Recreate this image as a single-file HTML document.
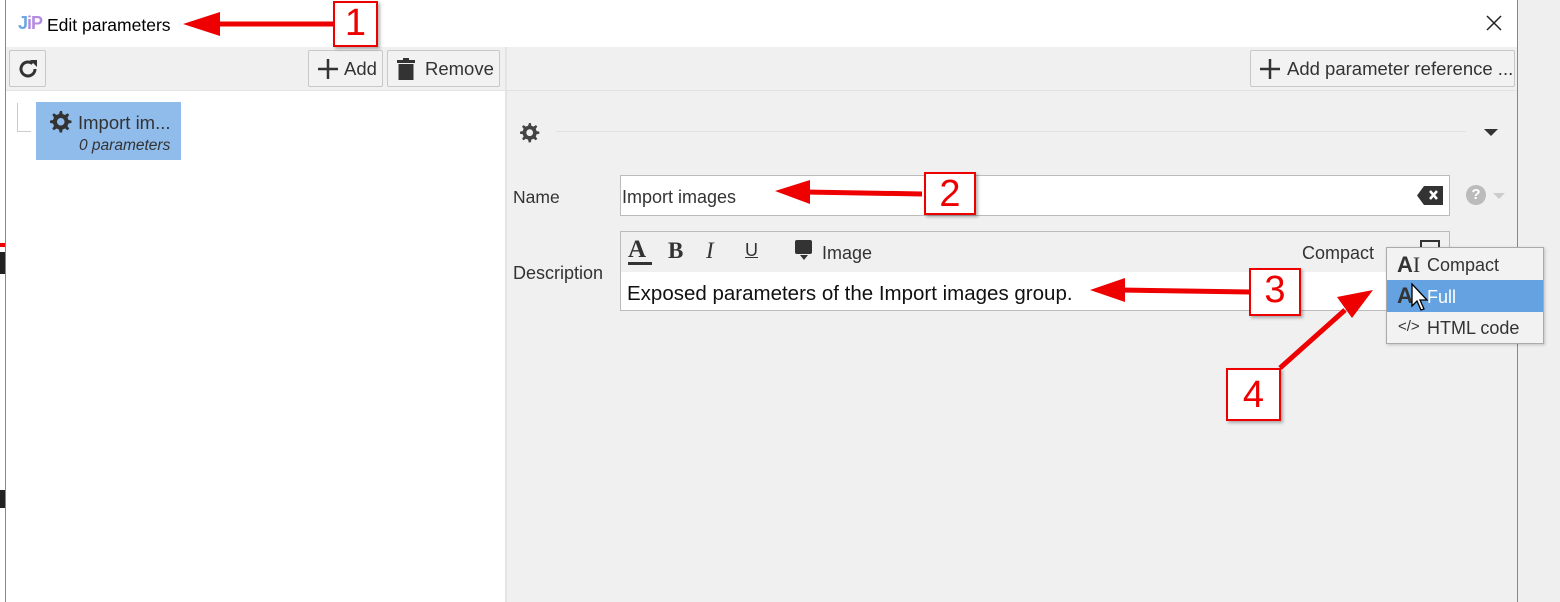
<!DOCTYPE html>
<html><head><style>
body{margin:0;width:1560px;height:602px;position:relative;overflow:hidden;background:#efefef;font-family:"Liberation Sans",sans-serif;}
.a{position:absolute;}
.btn{position:absolute;background:#f2f2f2;border:1px solid #c8c8c8;border-radius:2px;box-sizing:border-box;font-size:18.5px;color:#333;display:flex;align-items:center;}
.box{position:absolute;border:2px solid #e00;background:#fff;box-sizing:border-box;color:#e00;font-size:38px;text-align:center;line-height:40px;box-shadow:2px 2px 3px rgba(0,0,0,.3);}
.lbl{position:absolute;font-size:17.5px;color:#333;}
</style></head><body>
<svg width="0" height="0" style="position:absolute"><defs><g id="gear"><path d="M10 0 L12 0 L12.6 3 L15 4 L17.6 2.3 L19.2 3.9 L17.5 6.5 L18.5 9 L21.5 9.6 L21.5 11.9 L18.5 12.5 L17.5 15 L19.2 17.6 L17.6 19.2 L15 17.5 L12.6 18.5 L12 21.5 L9.6 21.5 L9 18.5 L6.5 17.5 L3.9 19.2 L2.3 17.6 L4 15 L3 12.5 L0 11.9 L0 9.6 L3 9 L4 6.5 L2.3 3.9 L3.9 2.3 L6.5 4 L9 3 Z M10.75 7 A3.75 3.75 0 1 0 10.76 7 Z" fill-rule="evenodd"/></g></defs></svg>
<div class="a" style="left:0;top:0;width:5px;height:602px;background:#fff"></div>
<div class="a" style="left:0;top:243px;width:5px;height:4px;background:#e00"></div>
<div class="a" style="left:0;top:252px;width:5px;height:22px;background:#222"></div>
<div class="a" style="left:0;top:490px;width:5px;height:18px;background:#222"></div>
<div class="a" style="left:5px;top:0;width:1513px;height:602px;background:#f0f0f0;border-left:1px solid #888;border-right:1px solid #888;box-sizing:border-box"></div>
<div class="a" style="left:6px;top:0;width:1511px;height:47px;background:#fff"></div>
<div class="a" style="left:18px;top:13px;font-size:18px;font-weight:bold;color:#6aa6e0;letter-spacing:-1px">J<span style="color:#b48be0">iP</span></div>
<div class="a" style="left:47px;top:15px;font-size:17.5px;color:#000">Edit parameters</div>
<svg class="a" style="left:1486px;top:15px" width="16" height="16"><path d="M1 1 L15 15 M15 1 L1 15" stroke="#222" stroke-width="1.5"/></svg>
<div class="a" style="left:6px;top:47px;width:499px;height:43px;background:#f0f0f0;border-bottom:1px solid #e2e2e2"></div>
<div class="btn" style="left:9px;top:50px;width:37px;height:37px;justify-content:center"><svg width="22" height="22" viewBox="0 0 22 22"><path d="M18 11 A7 7 0 1 1 15.5 5.6" fill="none" stroke="#333" stroke-width="3"/><polygon points="13,2 20,2 20,9" fill="#333"/></svg></div>
<div class="btn" style="left:308px;top:50px;width:75px;height:37px;padding-left:8px"><svg width="22" height="22" style="margin-right:5px"><path d="M11 1 V21 M1 11 H21" stroke="#333" stroke-width="2.5"/></svg>Add</div>
<div class="btn" style="left:387px;top:50px;width:113px;height:37px;padding-left:9px"><svg width="18" height="22" style="margin-right:10px"><rect x="0" y="2" width="18" height="3" fill="#333"/><rect x="6" y="0" width="6" height="3" fill="#333"/><rect x="1.5" y="6" width="15" height="16" fill="#333"/></svg>Remove</div>
<div class="a" style="left:6px;top:91px;width:499px;height:511px;background:#fff"></div>
<div class="a" style="left:505px;top:47px;width:2px;height:555px;background:#e4e4e4"></div>
<div class="a" style="left:17px;top:103px;width:13px;height:28px;border-left:1px solid #ccc;border-bottom:1px solid #ccc"></div>
<div class="a" style="left:36px;top:102px;width:145px;height:58px;background:#90bcec"></div>
<svg class="a" style="left:50px;top:111px" width="22" height="22"><use href="#gear" fill="#333"/></svg>
<div class="a" style="left:78px;top:112px;font-size:18.5px;color:#333">Import im...</div>
<div class="a" style="left:79px;top:137px;font-size:15.5px;font-style:italic;color:#333">0 parameters</div>
<div class="a" style="left:507px;top:90px;width:1010px;height:1px;background:#e2e2e2"></div>
<div class="btn" style="left:1250px;top:50px;width:265px;height:37px;padding-left:8px"><svg width="22" height="22" style="margin-right:6px"><path d="M11 1 V21 M1 11 H21" stroke="#333" stroke-width="2.5"/></svg>Add parameter reference ...</div>
<svg class="a" style="left:520px;top:123px" width="22" height="22"><g transform="scale(0.9)"><use href="#gear" fill="#444"/></g></svg>
<div class="a" style="left:556px;top:131px;width:910px;height:1px;background:#e2e2e2"></div>
<div class="a" style="left:1484px;top:129px;width:0;height:0;border-left:7px solid transparent;border-right:7px solid transparent;border-top:7px solid #333"></div>
<div class="lbl" style="left:513px;top:187px">Name</div>
<div class="a" style="left:620px;top:175px;width:830px;height:41px;background:#fff;border:1px solid #bbb;box-sizing:border-box"></div>
<div class="a" style="left:622px;top:187px;font-size:18px;color:#333">Import images</div>
<svg class="a" style="left:1417px;top:186px" width="26" height="19"><path d="M7 0 H26 V19 H7 L0 9.5 Z" fill="#333"/><path d="M13 5 L20 13 M20 5 L13 13" stroke="#fff" stroke-width="2.5"/></svg>
<div class="a" style="left:1466px;top:185px;width:20px;height:20px;border-radius:50%;background:#bbb;color:#fff;font-size:15px;font-weight:bold;text-align:center;line-height:20px">?</div>
<div class="a" style="left:1493px;top:193px;border-left:6px solid transparent;border-right:6px solid transparent;border-top:6px solid #ccc;width:0;height:0"></div>
<div class="lbl" style="left:513px;top:263px;font-size:18px">Description</div>
<div class="a" style="left:620px;top:231px;width:830px;height:80px;background:#f0f0f0;border:1px solid #bbb;box-sizing:border-box"></div>
<div class="a" style="left:621px;top:272px;width:828px;height:38px;background:#fff"></div>
<div class="a" style="left:628px;top:236px;font-size:25px;color:#333;font-family:'Liberation Serif',serif;font-weight:bold">A</div>
<div class="a" style="left:628px;top:262px;width:24px;height:3px;background:#333"></div>
<div class="a" style="left:668px;top:238px;font-size:23px;color:#333;font-family:'Liberation Serif',serif;font-weight:bold">B</div>
<div class="a" style="left:706px;top:238px;font-size:23px;color:#333;font-family:'Liberation Serif',serif;font-style:italic">I</div>
<div class="a" style="left:745px;top:240px;font-size:18px;color:#333;text-decoration:underline">U</div>
<div class="a" style="left:795px;top:240px;width:17px;height:14px;background:#333;border-radius:2px"></div>
<div class="a" style="left:800px;top:255px;border-left:4px solid transparent;border-right:4px solid transparent;border-top:5px solid #333;width:0;height:0"></div>
<div class="lbl" style="left:822px;top:243px;font-size:18px">Image</div>
<div class="lbl" style="left:1302px;top:243px;font-size:18px">Compact</div>
<div class="a" style="left:1420px;top:240px;width:16px;height:10px;border:2px solid #333;border-bottom:none"></div>
<div class="a" style="left:627px;top:282px;font-size:20.5px;color:#111">Exposed parameters of the Import images group.</div>
<div class="a" style="left:1386px;top:247px;width:158px;height:97px;background:#f2f2f2;border:1px solid #aaa;box-sizing:border-box;box-shadow:1px 1px 3px rgba(0,0,0,.2)"></div>
<div class="a" style="left:1387px;top:280px;width:156px;height:32px;background:#64a2e2"></div>
<div class="a" style="left:1397px;top:252px;font-size:22px;font-weight:bold;color:#333">A<span style="font-family:'Liberation Serif',serif;font-weight:normal">I</span></div>
<div class="lbl" style="left:1427px;top:255px;font-size:18px">Compact</div>
<div class="a" style="left:1397px;top:283px;font-size:22px;font-weight:bold;color:#333">A</div>
<div class="lbl" style="left:1427px;top:287px;font-size:18px;color:#fff">Full</div>
<svg class="a" style="left:1410px;top:282px" width="20" height="30"><path d="M2 2 L2 24 L7 19 L11 28 L14 27 L10 18 L17 18 Z" fill="#fff" stroke="#000" stroke-width="1.3"/></svg>
<div class="a" style="left:1398px;top:318px;font-size:15px;color:#333">&lt;/&gt;</div>
<div class="lbl" style="left:1427px;top:318px;font-size:18px">HTML code</div>
<svg class="a" style="left:0;top:0" width="1560" height="602">
<g fill="#e00" stroke="#e00">
<line x1="215" y1="24" x2="333" y2="24" stroke-width="5"/><polygon points="183,24 220,12 220,36" stroke="none"/>
<line x1="805" y1="192" x2="922" y2="194" stroke-width="5"/><polygon points="775,191 810,180 810,204" stroke="none"/>
<line x1="1120" y1="290" x2="1250" y2="292" stroke-width="5"/><polygon points="1090,290 1125,278 1125,302" stroke="none"/>
<line x1="1280" y1="368" x2="1345" y2="310" stroke-width="5"/><polygon points="1373,290 1337,297 1352,318" stroke="none"/>
</g></svg>
<div class="box" style="left:333px;top:1px;width:45px;height:46px">1</div>
<div class="box" style="left:924px;top:172px;width:52px;height:43px">2</div>
<div class="box" style="left:1249px;top:268px;width:52px;height:48px">3</div>
<div class="box" style="left:1226px;top:368px;width:55px;height:53px;line-height:50px">4</div>
</body></html>
